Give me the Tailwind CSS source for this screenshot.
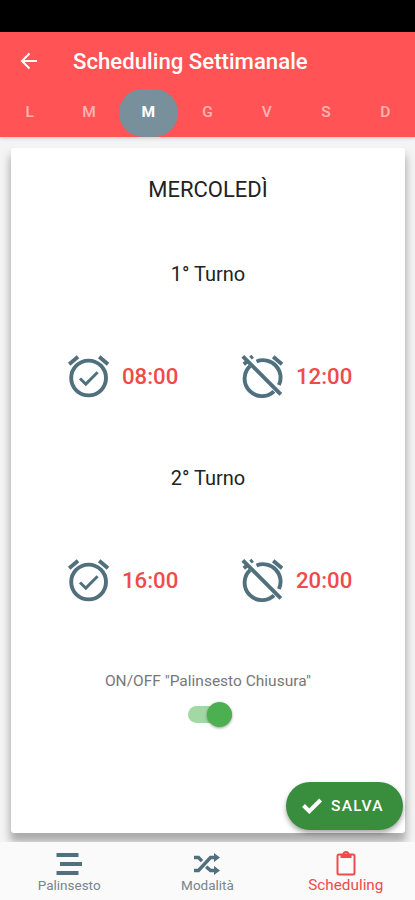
<!DOCTYPE html>
<html lang="it">

<head>
    <meta charset="UTF-8">
    <meta name="viewport" content="width=device-width, initial-scale=1.0">
    <title>Scheduling Settimanale</title>
    <script src="https://cdn.jsdelivr.net/npm/@tailwindcss/browser@4"></script>
</head>

<body class="bg-[#f4f4f4] font-[Roboto,sans-serif]">

    <div class="flex flex-col w-[415px] h-[900px] overflow-hidden">
        <!-- Status bar -->
        <div class="h-8 shrink-0 bg-black"></div>

        <!-- Header -->
        <header class="relative z-10 h-[105px] shrink-0 bg-[#ff5355] text-white shadow-[0_1px_4px_rgba(0,0,0,0.2)]">
            <div class="flex items-center h-[57px] pt-px pl-5">
                <svg class="w-[18px] h-[18px] shrink-0" viewBox="0 0 18 18" fill="none" stroke="currentColor" stroke-width="2">
                    <path d="M17 9H2.5M9.5 1.5 2 9l7.5 7.5" />
                </svg>
                <h1 class="ml-[35px] text-[22.2px] leading-7 font-medium whitespace-nowrap">Scheduling Settimanale</h1>
            </div>
            <nav class="grid grid-cols-7 h-12 text-[15.5px] font-medium text-white/55">
                <span class="flex items-center justify-center">L</span>
                <span class="flex items-center justify-center">M</span>
                <span class="flex items-center justify-center rounded-3xl bg-[#78909c] font-bold text-white">M</span>
                <span class="flex items-center justify-center">G</span>
                <span class="flex items-center justify-center">V</span>
                <span class="flex items-center justify-center">S</span>
                <span class="flex items-center justify-center">D</span>
            </nav>
        </header>

        <!-- Day card -->
        <main class="relative h-[705px] shrink-0 px-[11px] pt-[11px]">
            <section class="flex flex-col items-center h-[685px] w-[394px] rounded-[3px] bg-white shadow-[0_8px_8px_1px_rgba(0,0,0,0.3)] text-[#222]">
                <h2 class="mt-7 text-[22px] leading-7">MERCOLEDÌ</h2>

                <h3 class="mt-14 text-[20px] leading-7">1° Turno</h3>
                <div class="flex w-full mt-16 pl-[53px] text-[22.2px] leading-12 font-medium text-[#f04a4a]">
                    <div class="flex w-[175px]">
                        <svg class="w-12 h-12" viewBox="0 0 48 48" fill="none" stroke="#50707e" stroke-width="3.9">
                            <circle cx="24.6" cy="26" r="17.4" />
                            <path d="M5.200 12.200 14 4.800M35.200 4.800l8.800 7.400" />
                            <path d="m16 26.500 5.800 5.600 11.800-11.800" stroke-width="2.9" />
                        </svg>
                        <span class="ml-[10px]">08:00</span>
                    </div>
                    <div class="flex">
                        <svg class="w-12 h-12" viewBox="0 0 48 48" fill="none" stroke="#50707e" stroke-width="3.9">
                            <path d="M17.500 9.500A17.400 17.400 0 0 1 39.900 33M11 14.100A17.400 17.400 0 0 0 35 39.300" />
                            <path d="m3.800 4.300 38 38M4.800 12.200l3.600-3M11.500 6l2.200-1.800M34.200 4.800l8.800 7.400" />
                        </svg>
                        <span class="ml-[9px]">12:00</span>
                    </div>
                </div>

                <h3 class="mt-16 text-[20px] leading-7">2° Turno</h3>
                <div class="flex w-full mt-16 pl-[53px] text-[22.2px] leading-12 font-medium text-[#f04a4a]">
                    <div class="flex w-[175px]">
                        <svg class="w-12 h-12" viewBox="0 0 48 48" fill="none" stroke="#50707e" stroke-width="3.9">
                            <circle cx="24.6" cy="26" r="17.4" />
                            <path d="M5.200 12.200 14 4.800M35.200 4.800l8.800 7.400" />
                            <path d="m16 26.500 5.800 5.600 11.800-11.800" stroke-width="2.9" />
                        </svg>
                        <span class="ml-[10px]">16:00</span>
                    </div>
                    <div class="flex">
                        <svg class="w-12 h-12" viewBox="0 0 48 48" fill="none" stroke="#50707e" stroke-width="3.9">
                            <path d="M17.500 9.500A17.400 17.400 0 0 1 39.900 33M11 14.100A17.400 17.400 0 0 0 35 39.300" />
                            <path d="m3.800 4.300 38 38M4.800 12.200l3.600-3M11.500 6l2.200-1.800M34.200 4.800l8.800 7.400" />
                        </svg>
                        <span class="ml-[9px]">20:00</span>
                    </div>
                </div>

                <p class="mt-[65px] text-[15.5px] leading-6 text-[#777]">ON/OFF "Palinsesto Chiusura"</p>
                <!-- Switch -->
                <div class="flex items-center justify-end mt-[9px] ml-1 w-[44px] h-[25px]">
                    <div class="flex items-center justify-end w-full h-[17px] rounded-full bg-[#a2d8a4]">
                        <div class="w-[25px] h-[25px] shrink-0 rounded-full bg-[#4caf50] shadow-[0_1px_3px_rgba(0,0,0,0.4)]"></div>
                    </div>
                </div>
            </section>

            <!-- Save button floats over the card corner -->
            <button class="absolute right-3 bottom-3 flex items-center w-[117px] h-12 pl-4 rounded-full bg-[#388e3c] text-white shadow-[0_3px_5px_rgba(0,0,0,0.35)]">
                <svg class="w-5 h-4" viewBox="0 0 20 16" fill="none" stroke="currentColor" stroke-width="4">
                    <path d="m1.500 7.500 5.800 5.700L18.600 2" />
                </svg>
                <span class="ml-[9px] pt-px text-[15.5px] font-medium tracking-[1.3px]">SALVA</span>
            </button>
        </main>

        <!-- Bottom navigation -->
        <nav class="relative z-10 grid grid-cols-3 h-[58px] shrink-0 bg-[#fafafa] text-[13.5px] leading-4 text-[#78858c]">
            <div class="flex flex-col items-center pt-[11px]">
                <svg class="w-[26px] h-[22px]" viewBox="0 0 26 22" fill="none" stroke="#50707e" stroke-width="4">
                    <path d="M.5 2h22M4 11h22M.5 20h22" />
                </svg>
                <span class="mt-[2px]">Palinsesto</span>
            </div>
            <div class="flex flex-col items-center pt-[11px]">
                <svg class="w-[26px] h-[22px]" viewBox="0 0 26 22" fill="none" stroke="#50707e" stroke-width="3.4">
                    <path d="M0 4.500h4.500l3.500 3.700M0 17.500h4.500L16.500 4.500H21M12.200 13.700l4.300 3.800H21" />
                    <path d="M20 0v9l6-4.500zM20 13v9l6-4.500z" fill="#50707e" stroke="none" />
                </svg>
                <span class="mt-[2px]">Modalità</span>
            </div>
            <div class="flex flex-col items-center pt-[8px] text-[15.3px] text-[#f04a4a]">
                <svg class="w-5 h-[26px]" viewBox="0 0 20 26" fill="none" stroke="currentColor" stroke-width="2">
                    <rect x="1.500" y="4.500" width="17" height="20" rx="1.500" />
                    <path d="M5.500 5.500h9v1.500h-9zM7.500 4.500a2.500 2.500 0 0 1 5 0" />
                </svg>
                <span class="mt-px">Scheduling</span>
            </div>
        </nav>
    </div>

</body>

</html>
